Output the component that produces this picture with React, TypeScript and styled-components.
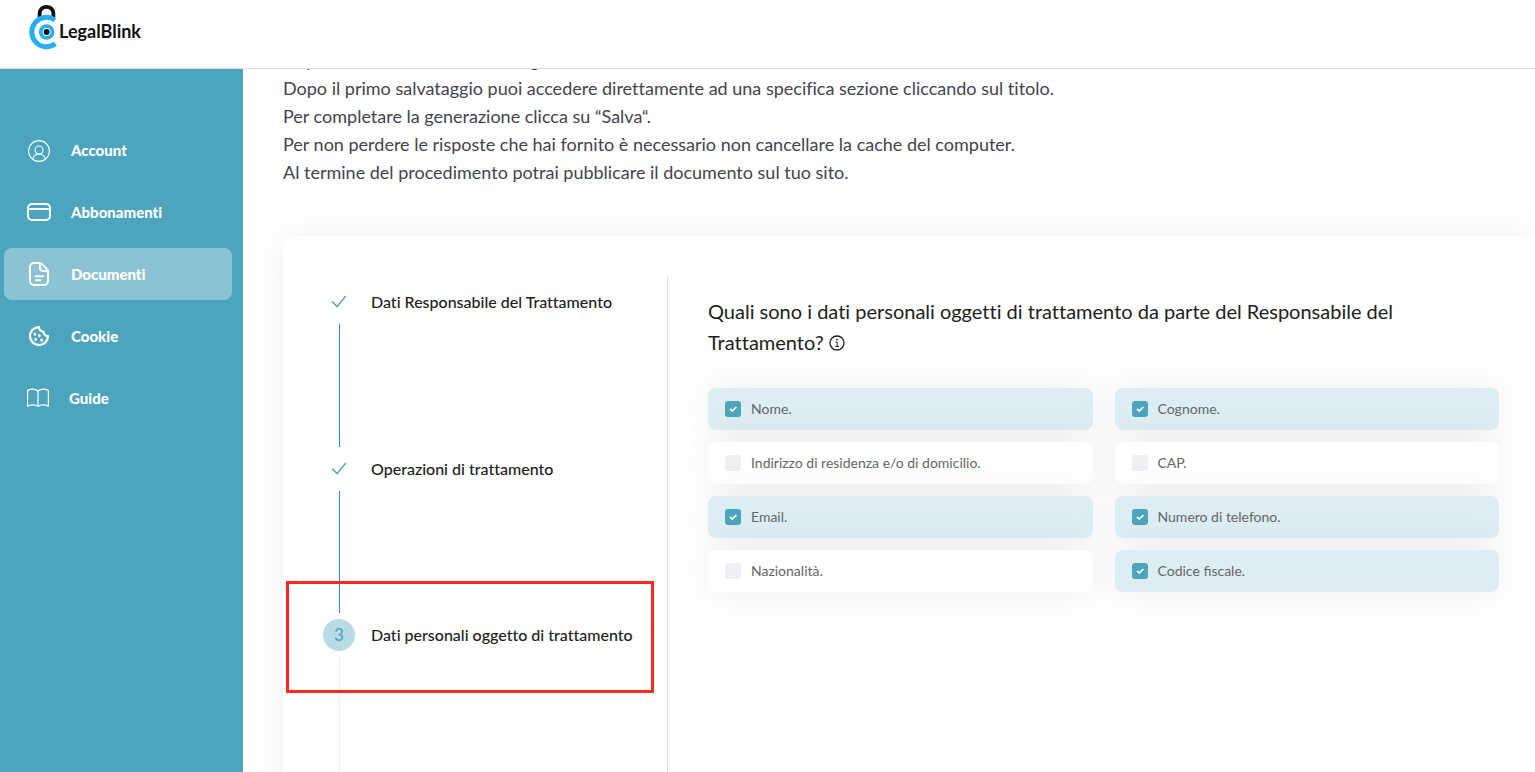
import React, { useState } from "react";
import styled, { createGlobalStyle } from "styled-components";
import { PiCookieBold } from "react-icons/pi";

const teal = "#4da4bd";

const GlobalStyle = createGlobalStyle`
  *, *::before, *::after { box-sizing: border-box; }
  html, body, #root { height: 100%; }
  body {
    margin: 0;
    background: #fff;
    color: #212121;
    font-family: Lato, "Liberation Sans", sans-serif;
    font-variant-ligatures: none;
    overflow: hidden;
  }
`;

const Page = styled.div`
  display: flex;
  flex-direction: column;
  height: 100%;
`;

const Header = styled.header`
  flex: none;
  height: 69px;
  padding: 4px 28px;
  background: #fff;
  border-bottom: 1px solid #dfdfe7;
`;

const Brand = styled.a`
  display: inline-flex;
  align-items: center;
  gap: 1px;
  color: #111;
  font-size: 18px;
  font-weight: 700;
  line-height: 24px;
  text-decoration: none;

  svg { display: block; }
  span { padding-top: 8px; }
`;

const Body = styled.div`
  display: flex;
  flex: 1;
  min-height: 0;
`;

const Sidebar = styled.nav`
  display: flex;
  flex-direction: column;
  flex: none;
  gap: 10px;
  width: 243px;
  padding: 55px 11px 0 4px;
  background: ${teal};
`;

const NavLink = styled.a<{ $active?: boolean }>`
  display: flex;
  align-items: center;
  gap: 20px;
  height: 52px;
  padding-left: 23px;
  border-radius: 8px;
  background: ${(p) => (p.$active ? "#8bc3d4" : "transparent")};
  color: #fff;
  font-size: 15px;
  font-weight: 900;
  text-decoration: none;
`;

const Main = styled.main`
  flex: 1;
  min-width: 0;
  padding-left: 40px;
  overflow: hidden;
`;

const Scrolled = styled.div`
  margin-top: -23px;
`;

const Intro = styled.p`
  margin: 0 0 50px;
  color: #45434f;
  font-size: 18px;
  font-weight: 400;
  line-height: 28px;
`;

const Card = styled.section`
  display: flex;
  min-height: 700px;
  padding: 40px 36px 40px 0;
  border-radius: 12px 0 0 12px;
  background: #fff;
  box-shadow: 0 0 40px rgba(0, 0, 0, 0.06);
`;

const StepsPane = styled.div`
  flex: none;
  width: 385px;
  padding: 10px 0 0 40px;
  border-right: 1px solid #e0e0e6;
`;

const Steps = styled.ol`
  display: flex;
  flex-direction: column;
  height: 500px;
  margin: 0;
  padding: 0;
  list-style: none;
`;

const Step = styled.li<{ $highlight?: boolean }>`
  position: relative;
  display: grid;
  grid-template: 32px 1fr / 32px 1fr;
  gap: 6px 16px;
  flex: 1;
  padding-bottom: 6px;

  &::after {
    content: "";
    display: ${(p) => (p.$highlight ? "block" : "none")};
    position: absolute;
    top: -38px;
    left: -37px;
    width: 368px;
    height: 112px;
    border: 3px solid #fc2b1f;
    pointer-events: none;
  }
`;

const StepIcon = styled.span<{ $current?: boolean }>`
  display: flex;
  align-items: center;
  justify-content: center;
  border-radius: 50%;
  background: ${(p) => (p.$current ? "#b8dce4" : "transparent")};
  color: ${teal};
  font-size: 17px;
  font-weight: 500;
  line-height: 20px;
`;

const StepTitle = styled.span`
  align-self: center;
  font-size: 16px;
  font-weight: 500;
  line-height: 32px;
  white-space: nowrap;
`;

const StepTail = styled.span<{ $done?: boolean }>`
  justify-self: center;
  width: 1px;
  margin-left: 1px;
  background: ${(p) => (p.$done ? "#2a8adf" : "#ececec")};
`;

const Question = styled.fieldset`
  flex: 1;
  min-width: 0;
  margin: 0;
  padding: 20px 0 0 40px;
  border: 0;
`;

const QuestionTitle = styled.legend`
  float: left;
  width: 100%;
  margin-bottom: 30px;
  padding: 0;
  font-size: 20px;
  font-weight: 400;
  line-height: 31px;

  svg { vertical-align: -1px; }
`;

const Options = styled.div`
  clear: both;
  display: grid;
  grid-template-columns: 1fr 1fr;
  gap: 12px 22px;
`;

const Option = styled.label<{ $checked: boolean }>`
  display: flex;
  align-items: center;
  gap: 10px;
  height: 42px;
  padding-left: 17px;
  border-radius: 8px;
  background: ${(p) => (p.$checked ? "#dcedf3" : "#fff")};
  box-shadow: 0 0 40px rgba(0, 0, 0, 0.07);
  color: #666;
  font-size: 14px;
  font-weight: 400;
  line-height: 16px;
  font-variant-ligatures: normal;
`;

const CheckSlot = styled.span`
  display: grid;
  place-items: center;

  > * { grid-area: 1 / 1; }
  svg { z-index: 1; pointer-events: none; }
`;

const Checkbox = styled.input`
  appearance: none;
  width: 16px;
  height: 16px;
  margin: 0;
  border-radius: 3px;
  background: #efeef4;

  &:checked { background: ${teal}; }
`;

const LogoMark = () => (
  <svg width="30" height="46" viewBox="28 4 30 46" fill="none" aria-hidden="true">
    <path d="M39.600 17V13.400a6.900 6.600 0 0 1 13.800 0V17" stroke="#111" strokeWidth="3.800" />
    <path d="M54.900 20A14.700 14.700 0 1 0 55.400 43.800" stroke="#25aef0" strokeWidth="5" />
    <circle cx="46.600" cy="32" r="5.900" stroke="#25aef0" strokeWidth="3.800" />
    <circle cx="46.600" cy="32" r="3" fill="#111" />
  </svg>
);

const AccountIcon = () => (
  <svg width="24" height="24" viewBox="0 0 24 24" fill="none" stroke="#fff" strokeWidth="1.1" aria-hidden="true">
    <circle cx="12" cy="13" r="10.4" />
    <circle cx="12" cy="12" r="4" />
    <path d="M5.700 21.200c.7-3.200 3.300-5.200 6.300-5.200s5.600 2 6.300 5.200" />
  </svg>
);

const CardIcon = () => (
  <svg width="24" height="24" viewBox="0 0 24 24" fill="none" stroke="#fff" strokeWidth="1.900" aria-hidden="true">
    <rect x="1" y="4" width="22" height="16" rx="4" />
    <path d="M1 9h22" />
  </svg>
);

const DocumentIcon = () => (
  <svg width="24" height="24" viewBox="0 0 24 24" fill="none" stroke="#fff" strokeWidth="1.900" strokeLinecap="round" strokeLinejoin="round" aria-hidden="true">
    <path d="M12.500 1H7a4 4 0 0 0-4 4v14a4 4 0 0 0 4 4h10a4 4 0 0 0 4-4V9.300c0-.8-.3-1.500-.8-2L14.800 1.900c-.6-.6-1.400-.9-2.300-.9Z" />
    <path d="M13 1.300V6a3 3 0 0 0 3 3h4.700" />
    <path d="M8.800 14.300h7.400M8.800 18.300h4.500" />
  </svg>
);

const BookIcon = () => (
  <svg width="22" height="22" viewBox="0 0 22 22" fill="none" stroke="#fff" strokeWidth="1.200" strokeLinejoin="round" aria-hidden="true">
    <path d="M11 4C8.500 2 4 2 .6 3.400V19.200C4 17.600 8.500 17.600 11 19.200 13.500 17.600 18 17.600 21.400 19.200V3.400C18 2 13.500 2 11 4Z" />
    <path d="M11 4v15" />
  </svg>
);

const DoneIcon = () => (
  <svg width="16" height="16" viewBox="0 0 16 16" fill="none" stroke={teal} strokeWidth="1.400" aria-hidden="true">
    <path d="M1.200 7.500L6 12.600 14.800 2" />
  </svg>
);

const TickIcon = () => (
  <svg width="16" height="16" viewBox="0 0 16 16" fill="none" stroke="#fff" strokeWidth="1.700" aria-hidden="true">
    <path d="M5 7.900l2.200 2.100 4.200-4" />
  </svg>
);

const InfoIcon = () => (
  <svg width="16" height="16" viewBox="0 0 16 16" fill="none" stroke="#212121" strokeWidth="1.300" role="img" aria-label="Info">
    <circle cx="8" cy="8" r="7" />
    <path d="M6.500 7h1.700v4.300M6.300 11.500h3.600" strokeWidth="1" />
    <circle cx="8" cy="4.700" r="0.900" fill="#212121" stroke="none" />
  </svg>
);

const navItems = [
  { label: "Account", icon: <AccountIcon /> },
  { label: "Abbonamenti", icon: <CardIcon /> },
  { label: "Documenti", icon: <DocumentIcon />, active: true },
  { label: "Cookie", icon: <PiCookieBold size={24} /> },
  { label: "Guide", icon: <BookIcon /> },
];

const steps = [
  { title: "Dati Responsabile del Trattamento", done: true },
  { title: "Operazioni di trattamento", done: true },
  { title: "Dati personali oggetto di trattamento", done: false },
];

const initialOptions = [
  { label: "Nome.", checked: true },
  { label: "Cognome.", checked: true },
  { label: "Indirizzo di residenza e/o di domicilio.", checked: false },
  { label: "CAP.", checked: false },
  { label: "Email.", checked: true },
  { label: "Numero di telefono.", checked: true },
  { label: "Nazionalità.", checked: false },
  { label: "Codice fiscale.", checked: true },
];

export default function App() {
  const [options, setOptions] = useState(initialOptions);
  const toggle = (label: string) =>
    setOptions((all) => all.map((o) => (o.label === label ? { ...o, checked: !o.checked } : o)));

  return (
    <Page>
      <GlobalStyle />
      <Header>
        <Brand href="#">
          <LogoMark />
          <span>LegalBlink</span>
        </Brand>
      </Header>
      <Body>
        <Sidebar>
          {navItems.map((item) => (
            <NavLink key={item.label} href="#" $active={item.active}>
              {item.icon}
              {item.label}
            </NavLink>
          ))}
        </Sidebar>
        <Main>
          <Scrolled>
            <Intro>
              Rispondi alle domande delle singole sezioni
              <br />
              Dopo il primo salvataggio puoi accedere direttamente ad una specifica sezione cliccando sul titolo.
              <br />
              Per completare la generazione clicca su “Salva“.
              <br />
              Per non perdere le risposte che hai fornito è necessario non cancellare la cache del computer.
              <br />
              Al termine del procedimento potrai pubblicare il documento sul tuo sito.
            </Intro>
            <Card>
              <StepsPane>
                <Steps>
                  {steps.map((step, i) => (
                    <Step key={step.title} $highlight={!step.done}>
                      <StepIcon $current={!step.done}>{step.done ? <DoneIcon /> : i + 1}</StepIcon>
                      <StepTitle>{step.title}</StepTitle>
                      <StepTail $done={step.done} />
                    </Step>
                  ))}
                </Steps>
              </StepsPane>
              <Question>
                <QuestionTitle>
                  Quali sono i dati personali oggetti di trattamento da parte del Responsabile del Trattamento?{" "}
                  <InfoIcon />
                </QuestionTitle>
                <Options>
                  {options.map((o) => (
                    <Option key={o.label} $checked={o.checked}>
                      <CheckSlot>
                        <Checkbox type="checkbox" checked={o.checked} onChange={() => toggle(o.label)} />
                        {o.checked && <TickIcon />}
                      </CheckSlot>
                      {o.label}
                    </Option>
                  ))}
                </Options>
              </Question>
            </Card>
          </Scrolled>
        </Main>
      </Body>
    </Page>
  );
}
